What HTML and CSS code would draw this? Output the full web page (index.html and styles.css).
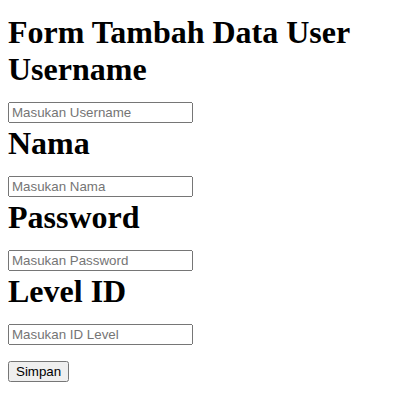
FILE: index.html
```html
<!DOCTYPE html>
<html lang="id">
<head>
<meta charset="utf-8">
<title>Form Tambah Data User</title>
<link rel="stylesheet" href="styles.css">
</head>
<body>
<form class="form">
  <h1 class="line title">Form Tambah Data User</h1>
  <label class="line" for="username">Username</label>
  <div class="line"><input class="field" id="username" type="text" placeholder="Masukan Username"></div>
  <label class="line" for="nama">Nama</label>
  <div class="line"><input class="field" id="nama" type="text" placeholder="Masukan Nama"></div>
  <label class="line" for="password">Password</label>
  <div class="line"><input class="field" id="password" type="password" placeholder="Masukan Password"></div>
  <label class="line" for="level">Level ID</label>
  <div class="line"><input class="field" id="level" type="text" placeholder="Masukan ID Level"></div>
  <div class="line"><button class="btn" type="submit">Simpan</button></div>
</form>
</body>
</html>
```

FILE: styles.css
```css
body {
  margin: 8px;
  font-family: "Liberation Serif", "Times New Roman", serif;
  color: #000;
  background: #fff;
}

.form {
  margin: 6px 0 0;
  font-size: 32px;
  font-weight: bold;
  line-height: normal;
}

.line {
  display: block;
  margin: 0;
}

.title {
  font-size: inherit;
  font-weight: inherit;
}

.field {
  font-family: "Liberation Sans", Arial, sans-serif;
  font-size: 13.333px;
  font-weight: normal;
}

.btn {
  font-family: "Liberation Sans", Arial, sans-serif;
  font-size: 13.333px;
  font-weight: normal;
}
```
